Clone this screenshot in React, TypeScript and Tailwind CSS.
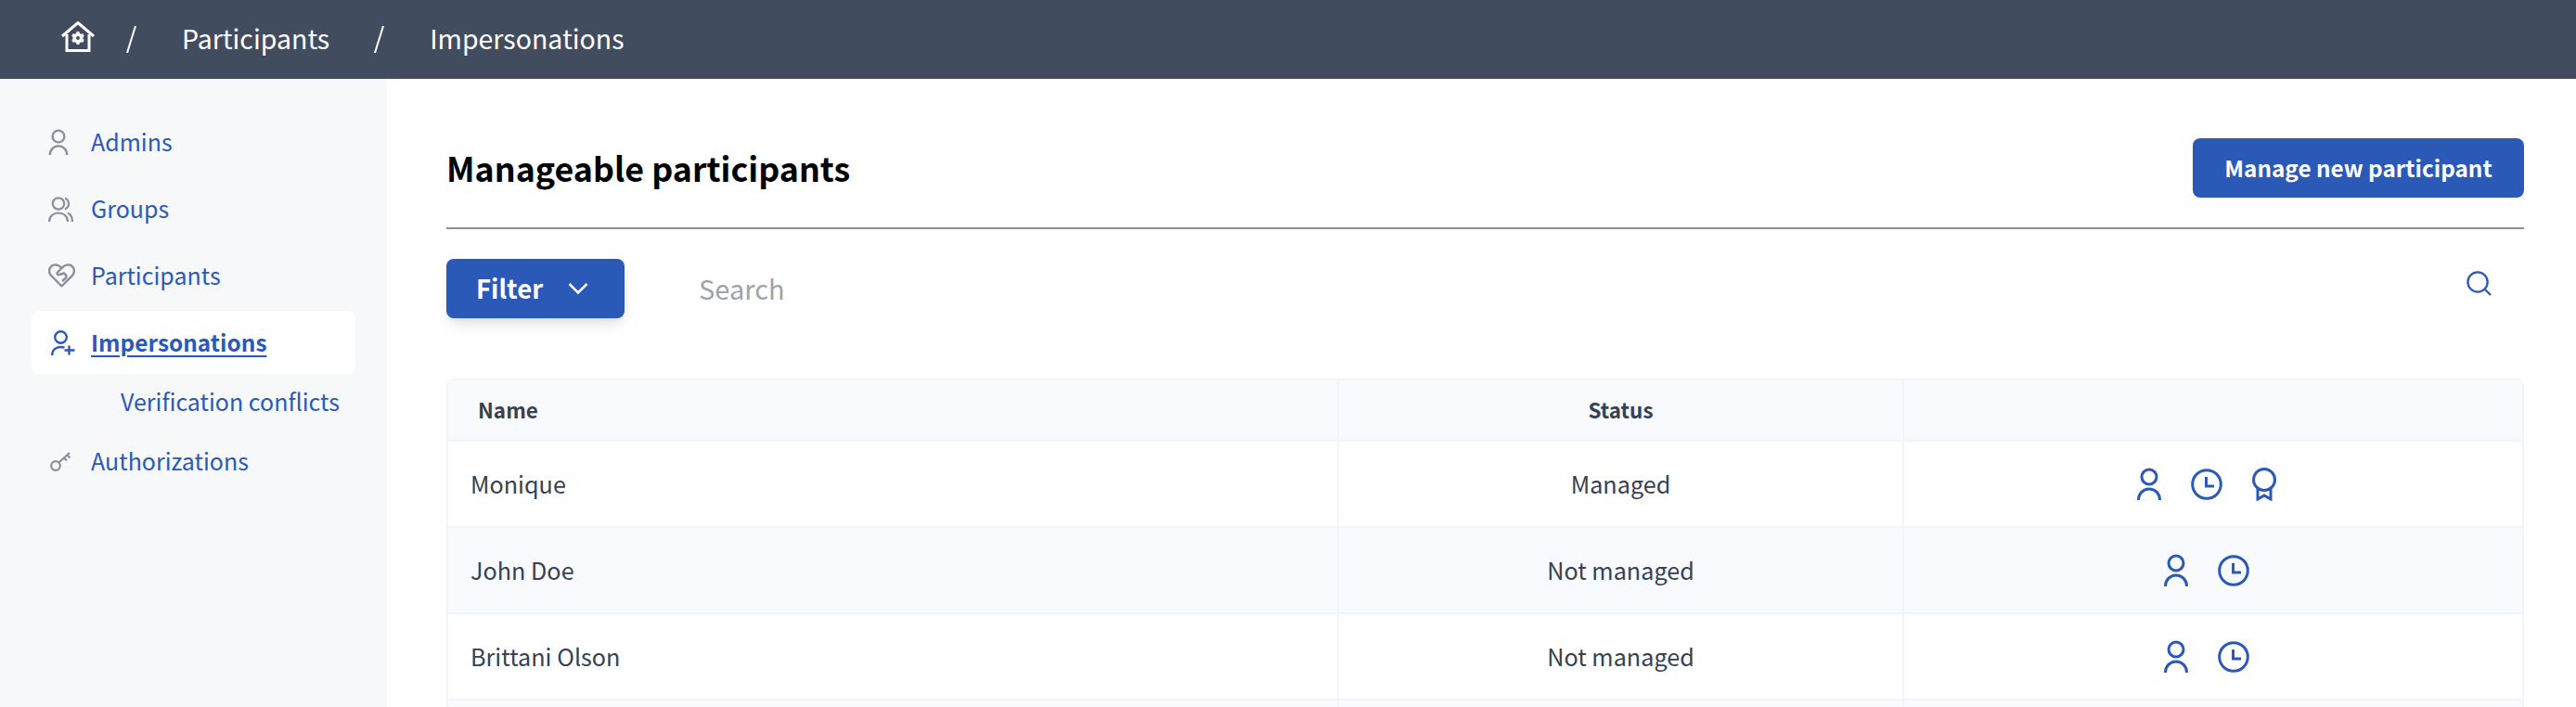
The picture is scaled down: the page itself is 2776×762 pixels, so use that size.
const font = { fontFamily: '"Noto Sans CJK SC", "Noto Sans", sans-serif' };

const PersonIcon = ({ className }: { className?: string }) => (
  <svg className={className} viewBox="0 0 26 35" fill="none" stroke="currentColor" strokeWidth={3}>
    <circle cx="13" cy="10" r="8" />
    <path d="M1.5 35C1.5 28 6.5 23 13 23s11.5 5 11.5 12" />
  </svg>
);

const GroupIcon = ({ className }: { className?: string }) => (
  <svg className={className} viewBox="0 0 27 27" fill="none" stroke="currentColor" strokeWidth={2.2}>
    <circle cx="11" cy="7.5" r="6.2" />
    <path d="M1 27c0-6 4.5-9.5 10-9.5S21 21 21 27" />
    <path d="M18 1.5c3 1.5 4 3.5 4 6s-1 4.5-4 6" />
    <path d="M21 17.5c3.5 1.5 5 5 5 9.5" />
  </svg>
);

const HeartIcon = ({ className }: { className?: string }) => (
  <svg className={className} viewBox="0 0 29 26" fill="none" stroke="currentColor" strokeWidth={2.4} strokeLinejoin="round">
    <path d="M14.5 24.5 3.2 13.2C0 10 .5 5 3.5 2.8 7 .5 11.5 1.5 14.5 5c3-3.500 7.500-4.500 11-2.200 3 2.200 3.500 7.200.3 10.400z" />
    <path d="M14.5 5 9.5 10c-.5 1.500 1 2.500 2.500 2l5-1.500c2 1.500 3 3.500 2 5L15 19" />
  </svg>
);

const PersonPlusIcon = ({ className }: { className?: string }) => (
  <svg className={className} viewBox="0 0 26 27" fill="none" stroke="currentColor" strokeWidth={2.4}>
    <circle cx="10.5" cy="7.5" r="6.3" />
    <path d="M1.2 27c0-5.500 3.800-9 9.300-9 1.500 0 2.800.2 4 .8" />
    <path d="M19.5 16.5v10M14.500 21.500h11" />
  </svg>
);

const KeyIcon = ({ className }: { className?: string }) => (
  <svg className={className} viewBox="0 0 24 22" fill="none" stroke="currentColor" strokeWidth={2.2}>
    <circle cx="6" cy="16" r="4.8" />
    <path d="M9.5 12.5 21 2M15 7.500l3 3M18.500 4.500l3 3" />
  </svg>
);

const ClockIcon = ({ className }: { className?: string }) => (
  <svg className={className} viewBox="0 0 34 34" fill="none" stroke="currentColor" strokeWidth={3}>
    <circle cx="17" cy="17" r="15.3" />
    <path d="M16.5 9v10h8.500" />
  </svg>
);

const AwardIcon = ({ className }: { className?: string }) => (
  <svg className={className} viewBox="0 0 26 36" fill="none" stroke="currentColor" strokeWidth={3}>
    <circle cx="13" cy="13" r="11.5" />
    <path d="M6 23v11l7-4 7 4V23" />
  </svg>
);

const HomeIcon = ({ className }: { className?: string }) => (
  <svg className={className} viewBox="0 0 36 33" fill="none" stroke="currentColor">
    <path d="M1 16 18 1.500 35 16" strokeWidth={3} />
    <path d="M6 14v17.500h24V14" strokeWidth={3} />
    <circle cx="18" cy="18" r="3.800" strokeWidth={3.6} />
    <path d="M18 11v3M18 22v3M12 14.500l2.600 1.500M21.400 20l2.600 1.500M12 21.500l2.600-1.500M21.400 16l2.600-1.500" strokeWidth={3.2} />
  </svg>
);

const Slash = () => (
  <svg className="w-[11px] h-[29px] text-white" viewBox="0 0 11 29" fill="none" stroke="currentColor" strokeWidth={2}>
    <path d="M10 0 1 29" />
  </svg>
);

const navItems = [
  { label: 'Admins', icon: <PersonIcon className="w-[22px] h-[28px]" /> },
  { label: 'Groups', icon: <GroupIcon className="w-[27px] h-[27px]" /> },
  { label: 'Participants', icon: <HeartIcon className="w-[29px] h-[26px]" /> },
];

const rows = [
  { name: 'Monique', status: 'Managed', award: true },
  { name: 'John Doe', status: 'Not managed', award: false },
  { name: 'Brittani Olson', status: 'Not managed', award: false },
];

export default function App() {
  return (
    <div className="h-[762px] overflow-hidden bg-white" style={font}>
      <header className="h-[85px] bg-[#414d5f] flex items-center pl-[66px] text-white text-[28.5px] leading-none">
        <HomeIcon className="w-[36px] h-[33px] -mt-[6px]" />
        <span className="ml-[34px]"><Slash /></span>
        <span className="ml-[49px] -mt-[2px]">Participants</span>
        <span className="ml-[48px]"><Slash /></span>
        <span className="ml-[49px] -mt-[2px]">Impersonations</span>
      </header>

      <div className="flex h-[677px]">
        <aside className="w-[417px] shrink-0 bg-[#f7f8fa] px-[34px] pt-[34px] text-[25px] text-[#2b59b8]">
          <nav className="flex flex-col gap-1">
            {navItems.map((item) => (
              <a key={item.label} className="h-[68px] flex items-center">
                <span className="w-[64px] pl-[18px] text-[#8b8f9b] flex items-center shrink-0">{item.icon}</span>
                {item.label}
              </a>
            ))}
            <a className="h-[68px] flex items-center bg-white rounded-lg font-semibold">
              <span className="w-[64px] pl-[21px] flex items-center shrink-0">
                <PersonPlusIcon className="w-[26px] h-[27px]" />
              </span>
              <span className="text-[24.4px] underline underline-offset-4 decoration-2">Impersonations</span>
            </a>
          </nav>
          <a className="h-[60px] flex items-center pl-[96px] whitespace-nowrap">Verification conflicts</a>
          <a className="h-[68px] flex items-center">
            <span className="w-[64px] pl-[20px] text-[#8b8f9b] flex items-center shrink-0">
              <KeyIcon className="w-[24px] h-[22px]" />
            </span>
            Authorizations
          </a>
        </aside>

        <main className="flex-1 pl-[64px] pr-[56px] pt-[64px]">
          <div className="flex items-center justify-between h-[64px]">
            <h1 className="text-[35.8px] font-bold text-black leading-none">Manageable participants</h1>
            <button className="w-[357px] h-[64px] rounded-lg bg-[#2b59b8] text-white text-[24.3px] font-semibold">
              Manage new participant
            </button>
          </div>
          <div className="h-[2px] bg-[#8b8f9b] mt-[32px]" />

          <div className="flex items-center mt-[32px] h-[64px]">
            <button className="w-[192px] h-[64px] rounded-lg bg-[#2b59b8] text-white text-[27.5px] font-semibold flex items-center pl-[32px] shadow-lg">
              Filter
              <svg className="w-[22px] h-[14px] ml-[27px]" viewBox="0 0 22 14" fill="none" stroke="currentColor" strokeWidth={2.5}>
                <path d="M1.500 2 11 11.500 20.500 2" />
              </svg>
            </button>
            <span className="ml-[80px] text-[29px] text-[#9ca3af]">Search</span>
            <svg className="ml-auto mr-[35px] mb-[11px] w-[27px] h-[27px] text-[#2b59b8]" viewBox="0 0 28 28" fill="none" stroke="currentColor" strokeWidth={2.4}>
              <circle cx="12.5" cy="12.5" r="11" />
              <path d="M20.500 20.500 27 27" />
            </svg>
          </div>

          <div className="mt-[65px] rounded-t-lg border-2 border-[#f1f5fb] text-[#374151]">
            <div className="grid grid-cols-[958px_609px_1fr] h-[64px] bg-[#f9fafd] items-center text-[22.5px] font-semibold">
              <div className="pl-[32px] h-full flex items-center">Name</div>
              <div className="h-full flex items-center justify-center border-l-2 border-[#f1f5fb]">Status</div>
              <div className="h-full border-l-2 border-[#f1f5fb]" />
            </div>
            {rows.map((row, i) => (
              <div
                key={row.name}
                className={`grid grid-cols-[958px_609px_1fr] h-[93px] border-t-2 border-[#f1f5fb] text-[25.2px] ${i % 2 === 1 ? 'bg-[#f9fafd]' : 'bg-white'}`}
              >
                <div className="pl-[24px] flex items-center">{row.name}</div>
                <div className="flex items-center justify-center border-l-2 border-[#f1f5fb]">{row.status}</div>
                <div className="flex items-center justify-center gap-[32px] border-l-2 border-[#f1f5fb] pr-[15px] text-[#2b59b8]">
                  <PersonIcon className="w-[26px] h-[35px]" />
                  <ClockIcon className="w-[34px] h-[34px]" />
                  {row.award && <AwardIcon className="w-[26px] h-[36px]" />}
                </div>
              </div>
            ))}
            <div className="grid grid-cols-[958px_609px_1fr] h-[93px] border-t-2 border-[#f1f5fb] bg-[#f9fafd]">
              <div />
              <div className="border-l-2 border-[#f1f5fb]" />
              <div className="border-l-2 border-[#f1f5fb]" />
            </div>
          </div>
        </main>
      </div>
    </div>
  );
}
